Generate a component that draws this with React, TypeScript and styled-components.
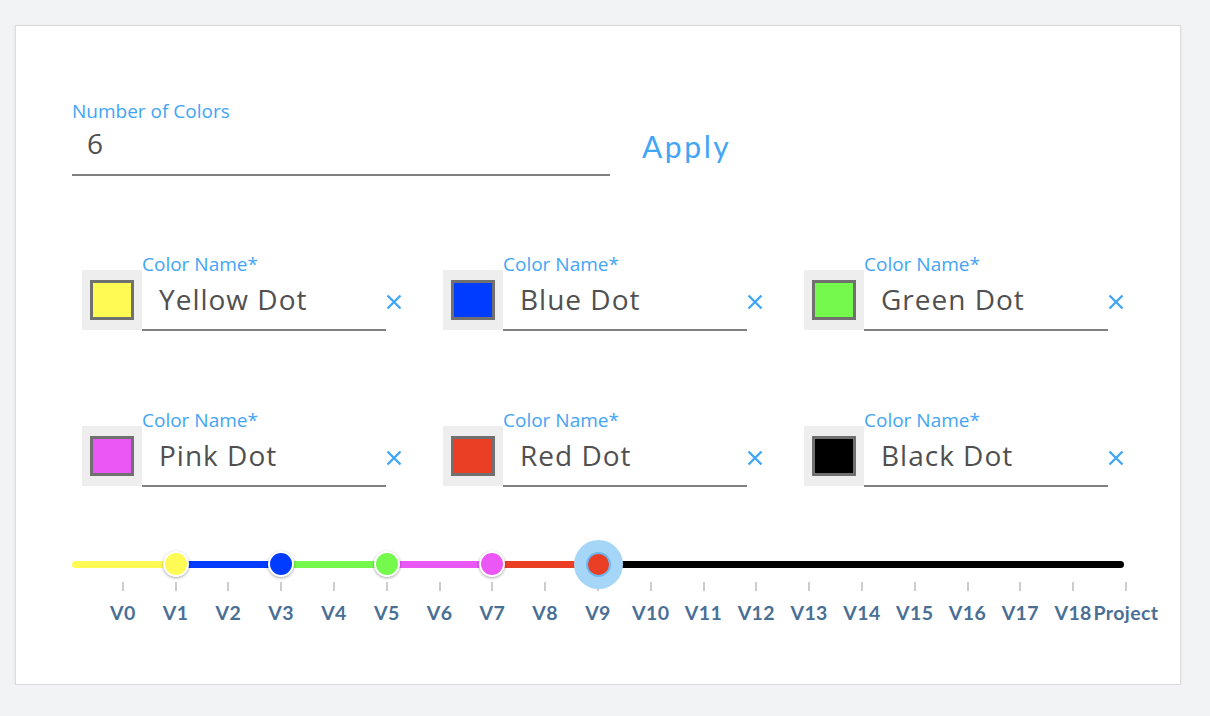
import React from "react";
import styled, { createGlobalStyle } from "styled-components";

const GlobalStyle = createGlobalStyle`
  html, body { margin: 0; padding: 0; background: #f2f3f5; }
  body { font-family: "Open Sans", "Noto Sans", sans-serif; }
  * { box-sizing: border-box; }
`;

const BLUE = "#42a5f5";
const UNIT = 52.8;

const Card = styled.div`
  width: 1166px;
  height: 660px;
  margin: 25px 0 0 15px;
  background: #fff;
  border: 1px solid #dcdcdc;
  box-shadow: 0 1px 3px rgba(0, 0, 0, 0.08);
  padding: 73px 56px 0 56px;
`;

const TopRow = styled.div`
  display: flex;
  align-items: flex-end;
`;

const Field = styled.div<{ $width: number }>`
  display: flex;
  flex-direction: column;
  width: ${(p) => p.$width}px;
`;

const FieldLabel = styled.label`
  font-family: "Open Sans", sans-serif;
  font-size: 19px;
  line-height: 24px;
  color: ${BLUE};
  white-space: nowrap;
`;

const TextInput = styled.input<{ $height: number; $padBottom: number; $padLeft: number; $spacing: number }>`
  display: block;
  width: 100%;
  height: ${(p) => p.$height}px;
  margin: 0;
  padding: 0 0 ${(p) => p.$padBottom}px ${(p) => p.$padLeft}px;
  border: none;
  border-bottom: 2px solid #808080;
  outline: none;
  background: transparent;
  font-family: "Open Sans", sans-serif;
  font-size: 28px;
  letter-spacing: ${(p) => p.$spacing}px;
  color: #505050;
`;

const ApplyButton = styled.button`
  margin: 0 0 12px 32px;
  padding: 0;
  border: none;
  background: none;
  font-family: Lato, sans-serif;
  font-size: 30px;
  line-height: 36px;
  letter-spacing: 2.6px;
  color: ${BLUE};
  cursor: pointer;
`;

const ColorGrid = styled.div`
  display: grid;
  grid-template-columns: repeat(3, 320px);
  column-gap: 41px;
  row-gap: 77px;
  margin: 76px 0 0 10px;
`;

const ColorCell = styled.div`
  display: flex;
  align-items: flex-end;
`;

const SwatchBox = styled.div`
  width: 60px;
  height: 60px;
  margin-bottom: 1px;
  background: #eeeeee;
  display: flex;
  align-items: center;
  justify-content: center;
  flex-shrink: 0;
`;

const Swatch = styled.div<{ $color: string }>`
  width: 44px;
  height: 40px;
  background: ${(p) => p.$color};
  border: 3px solid #707070;
`;

const ClearButton = styled.button`
  width: 16px;
  height: 16px;
  margin: 0 0 21px 0;
  padding: 0;
  border: none;
  background: none;
  display: flex;
  flex-shrink: 0;
  cursor: pointer;
`;

const SliderBlock = styled.div`
  width: ${UNIT * 20}px;
  margin: 53px 0 0 -2px;
`;

const Rail = styled.div`
  position: relative;
  height: 48px;
  display: flex;
  align-items: center;
`;

const Track = styled.div`
  display: flex;
  width: 100%;
  height: 7px;
  margin: 0 2px;
  border-radius: 4px;
  overflow: hidden;
`;

const Segment = styled.div<{ $color: string; $grow?: boolean }>`
  height: 100%;
  background: ${(p) => p.$color};
  flex: ${(p) => (p.$grow ? "1 1 auto" : "0 0 auto")};
`;

const Thumb = styled.div<{ $color: string; $active?: boolean }>`
  position: absolute;
  top: ${(p) => (p.$active ? 11.5 : 11)}px;
  width: ${(p) => (p.$active ? 25 : 26)}px;
  height: ${(p) => (p.$active ? 25 : 26)}px;
  border-radius: 50%;
  background: ${(p) => p.$color};
  border: 2px solid ${(p) => (p.$active ? "#6bb8f0" : "#ffffff")};
  box-shadow: ${(p) =>
    p.$active ? "0 0 0 12px #a6d6f7" : "0 1px 3px rgba(0, 0, 0, 0.35)"};
`;

const Marks = styled.div`
  display: flex;
  margin: -6px 0 0 ${UNIT / 2}px;
`;

const Mark = styled.div`
  width: ${UNIT}px;
  flex: 0 0 ${UNIT}px;
  display: flex;
  flex-direction: column;
  align-items: center;
`;

const Tick = styled.div`
  width: 2px;
  height: 9px;
  background: #cccccc;
`;

const MarkLabel = styled.span`
  margin-top: 11px;
  font-family: Lato, sans-serif;
  font-weight: 700;
  font-size: 19.5px;
  line-height: 22px;
  letter-spacing: 0.4px;
  color: #4a6f95;
  white-space: nowrap;
`;

const colors = [
  { name: "Yellow Dot", color: "#fffb54" },
  { name: "Blue Dot", color: "#003cff" },
  { name: "Green Dot", color: "#75f94c" },
  { name: "Pink Dot", color: "#ea57f5" },
  { name: "Red Dot", color: "#ea3f25" },
  { name: "Black Dot", color: "#000000" },
];

const marks = [...Array.from({ length: 19 }, (_, i) => `V${i}`), "Project"];
const thumbValues = [1, 3, 5, 7, 9];
const xOf = (v: number) => (v + 1) * UNIT;

const CloseIcon = () => (
  <svg width="16" height="16" viewBox="0 0 16 16">
    <path d="M1.5 1.5 L14.5 14.5 M14.5 1.5 L1.5 14.5" stroke={BLUE} strokeWidth="2.4" strokeLinecap="butt" />
  </svg>
);

export default function App() {
  const segmentWidths = [xOf(1) - 2, UNIT * 2, UNIT * 2, UNIT * 2, UNIT * 2];
  return (
    <>
      <GlobalStyle />
      <Card>
        <TopRow>
          <Field $width={538}>
            <FieldLabel>Number of Colors</FieldLabel>
            <TextInput $height={53} $padBottom={11} $padLeft={15} $spacing={0} defaultValue="6" />
          </Field>
          <ApplyButton>Apply</ApplyButton>
        </TopRow>

        <ColorGrid>
          {colors.map((c) => (
            <ColorCell key={c.name}>
              <SwatchBox>
                <Swatch $color={c.color} />
              </SwatchBox>
              <Field $width={244}>
                <FieldLabel>Color Name*</FieldLabel>
                <TextInput $height={55} $padBottom={7} $padLeft={17} $spacing={1} defaultValue={c.name} />
              </Field>
              <ClearButton aria-label="clear">
                <CloseIcon />
              </ClearButton>
            </ColorCell>
          ))}
        </ColorGrid>

        <SliderBlock>
          <Rail>
            <Track>
              {segmentWidths.map((w, i) => (
                <Segment key={i} $color={colors[i].color} style={{ width: w }} />
              ))}
              <Segment $color="#000000" $grow />
            </Track>
            {thumbValues.map((v, i) => {
              const active = i === thumbValues.length - 1;
              const size = active ? 25 : 26;
              return (
                <Thumb
                  key={v}
                  $color={colors[i].color}
                  $active={active}
                  style={{ left: xOf(v) - size / 2 }}
                />
              );
            })}
          </Rail>
          <Marks>
            {marks.map((m) => (
              <Mark key={m}>
                <Tick />
                <MarkLabel>{m}</MarkLabel>
              </Mark>
            ))}
          </Marks>
        </SliderBlock>
      </Card>
    </>
  );
}
